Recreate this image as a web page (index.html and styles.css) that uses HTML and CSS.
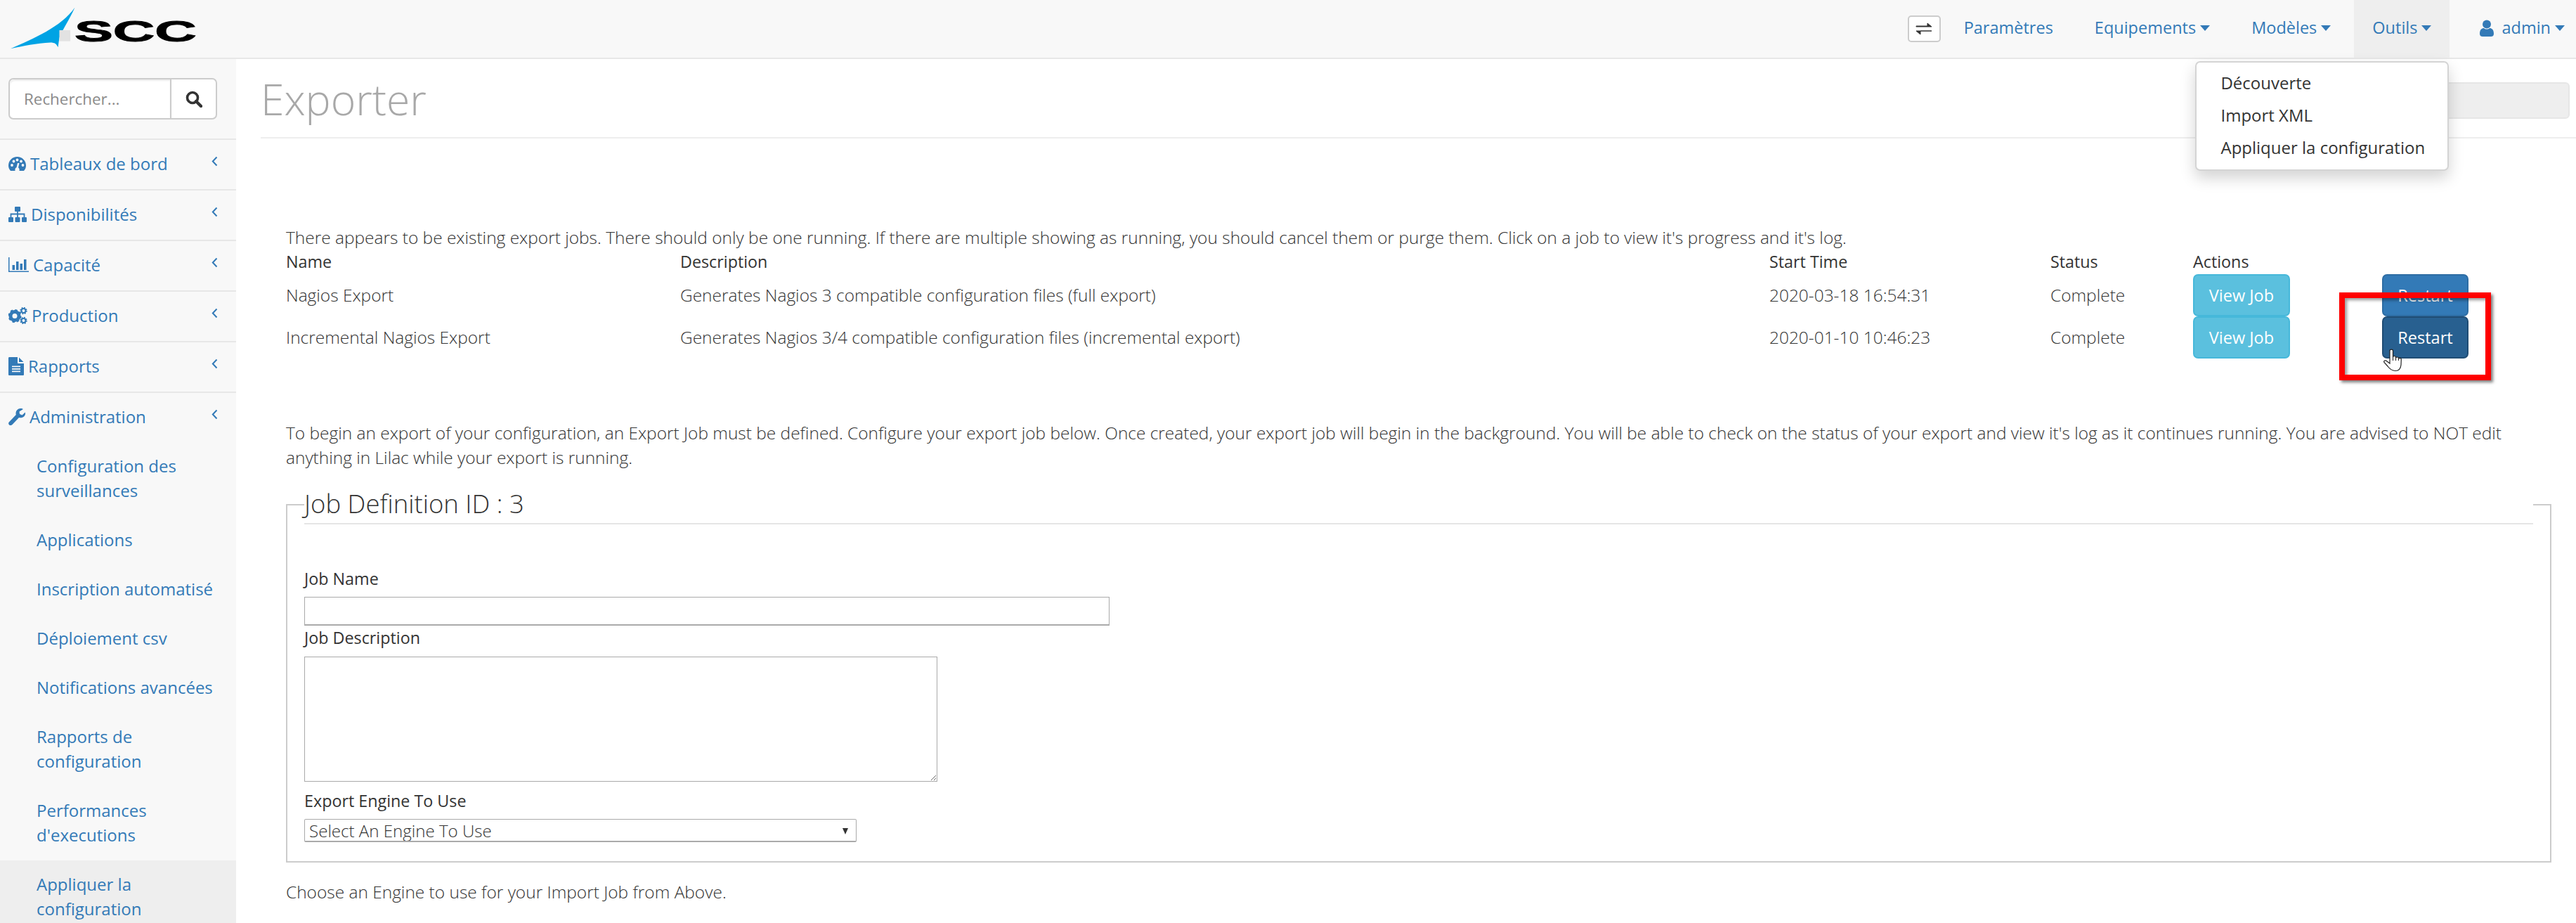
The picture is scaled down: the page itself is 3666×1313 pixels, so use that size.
FILE: index.html
```html
<!DOCTYPE html>
<html lang="fr">
<head>
    <meta charset="UTF-8">
    <title>Exporter</title>
    <link rel="stylesheet" href="styles.css">
</head>
<body>
    <nav class="navbar">
        <svg class="logo" viewBox="0 0 290 84" width="290" height="84">
            <path d="M105.5 11C97 30 88 42 83 55L81 69C79 64 76 62 70 62C50 63 30 67 12 71C45 56 85 40 105.5 11Z" fill="#00a3e4"/>
            <rect x="83" y="44" width="16" height="16" fill="#e2e2e2"/>
            <text x="105" y="60.5" class="logo-text" textLength="178" lengthAdjust="spacingAndGlyphs">SCC</text>
        </svg>
        <div class="nav-right">
            <button class="toggle-btn">
                <svg viewBox="0 0 24 20" width="24" height="20">
                    <path d="M1 6H17V2L23 7H1ZM23 13H7V18L1 13H23Z" fill="#333" stroke="#333" stroke-width="1"/>
                </svg>
            </button>
            <a class="nav-item">Paramètres</a>
            <a class="nav-item">Equipements<span class="caret"></span></a>
            <a class="nav-item">Modèles<span class="caret"></span></a>
            <div class="nav-item active">Outils<span class="caret"></span>
                <ul class="dropdown">
                    <li>Découverte</li>
                    <li>Import XML</li>
                    <li>Appliquer la configuration</li>
                </ul>
            </div>
            <a class="nav-item last">
                <svg class="user-icon" viewBox="0 0 20 24" width="20" height="24">
                    <circle cx="10" cy="6.5" r="6"/>
                    <path d="M0 20C0 14 3 12 6 12C8 14 12 14 14 12C17 12 20 14 20 20C20 23 18 24 16 24H4C2 24 0 23 0 20Z"/>
                </svg>admin<span class="caret"></span>
            </a>
        </div>
    </nav>

    <div class="wrapper">
        <aside class="sidebar">
            <div class="search-box">
                <div class="search-group">
                    <input class="search-input" type="text" placeholder="Rechercher...">
                    <button class="search-btn">
                        <svg viewBox="0 0 24 24" width="24" height="24">
                            <circle cx="10" cy="10" r="7.5" fill="none" stroke="#333" stroke-width="3.6"/>
                            <path d="M15 15L22 22" stroke="#333" stroke-width="4.4" stroke-linecap="round"/>
                        </svg>
                    </button>
                </div>
            </div>
            <ul class="side-menu">
                <li class="side-item">
                    <a class="side-link">
                        <svg class="icon" viewBox="0 0 25 20" width="25" height="20">
                            <path fill-rule="evenodd" d="M3 20C1 18 0 15 0 12.500C0 5.500 5.500 0 12.500 0S25 5.500 25 12.500C25 15 24 18 22 20H15.500C16 17.500 15 16 14 15.500L15.500 9L13 9L11.500 15.300C10 15.500 9 17.500 9.500 20Z"/>
                            <circle cx="5" cy="12" r="1.900" fill="#f8f8f8"/>
                            <circle cx="7.500" cy="6.500" r="1.900" fill="#f8f8f8"/>
                            <circle cx="12.500" cy="4.500" r="1.900" fill="#f8f8f8"/>
                            <circle cx="18" cy="6.500" r="1.900" fill="#f8f8f8"/>
                            <circle cx="20.500" cy="12" r="1.900" fill="#f8f8f8"/>
                        </svg>
                        <span class="side-label">Tableaux de bord</span>
                        <svg class="chevron" viewBox="0 0 9 15" width="9" height="15"><path d="M7.500 1.500L1.800 7.500L7.500 13.500"/></svg>
                    </a>
                </li>
                <li class="side-item">
                    <a class="side-link">
                        <svg class="icon" viewBox="0 0 26 22" width="26" height="22">
                            <rect x="9" y="0" width="8" height="7" rx="1"/>
                            <rect x="0" y="15" width="7" height="7" rx="1"/>
                            <rect x="9.500" y="15" width="7" height="7" rx="1"/>
                            <rect x="19" y="15" width="7" height="7" rx="1"/>
                            <path d="M3.500 15V10.500H22.500V15M13 7V15" fill="none" stroke="#337ab7" stroke-width="1.800"/>
                        </svg>
                        <span class="side-label">Disponibilités</span>
                        <svg class="chevron" viewBox="0 0 9 15" width="9" height="15"><path d="M7.500 1.500L1.800 7.500L7.500 13.500"/></svg>
                    </a>
                </li>
                <li class="side-item">
                    <a class="side-link">
                        <svg class="icon" viewBox="0 0 29 21" width="29" height="21">
                            <path d="M0 0H1.500V19.500H29V21H0Z"/>
                            <rect x="5.500" y="11" width="3.500" height="7"/>
                            <rect x="11" y="6" width="3.500" height="12"/>
                            <rect x="16.500" y="9" width="3.500" height="9"/>
                            <rect x="22" y="3" width="3.500" height="15"/>
                        </svg>
                        <span class="side-label">Capacité</span>
                        <svg class="chevron" viewBox="0 0 9 15" width="9" height="15"><path d="M7.500 1.500L1.800 7.500L7.500 13.500"/></svg>
                    </a>
                </li>
                <li class="side-item">
                    <a class="side-link">
                        <svg class="icon" viewBox="0 0 27 24" width="27" height="24">
                            <circle cx="9" cy="12.500" r="6" fill="none" stroke="#337ab7" stroke-width="5"/>
                            <circle cx="9" cy="12.500" r="8.200" fill="none" stroke="#337ab7" stroke-width="2.600" stroke-dasharray="3.400 3.040"/>
                            <circle cx="21.500" cy="5" r="3" fill="none" stroke="#337ab7" stroke-width="2"/>
                            <circle cx="21.500" cy="5" r="4.300" fill="none" stroke="#337ab7" stroke-width="1.800" stroke-dasharray="1.800 1.580"/>
                            <circle cx="21.500" cy="19" r="3" fill="none" stroke="#337ab7" stroke-width="2"/>
                            <circle cx="21.500" cy="19" r="4.300" fill="none" stroke="#337ab7" stroke-width="1.800" stroke-dasharray="1.800 1.580"/>
                        </svg>
                        <span class="side-label">Production</span>
                        <svg class="chevron" viewBox="0 0 9 15" width="9" height="15"><path d="M7.500 1.500L1.800 7.500L7.500 13.500"/></svg>
                    </a>
                </li>
                <li class="side-item">
                    <a class="side-link">
                        <svg class="icon" viewBox="0 0 22 26" width="22" height="26">
                            <path fill-rule="evenodd" d="M1.500 0H13V8C13 8.500 13.500 9 14 9H22V24.500C22 25.500 21.500 26 20.500 26H1.500C0.500 26 0 25.500 0 24.500V1.500C0 0.500 0.500 0 1.500 0ZM5 12.500V14.300H17V12.500ZM5 16V17.800H17V16ZM5 19.500V21.300H17V19.500Z"/>
                            <path d="M15 0.500L21.500 7H15Z"/>
                        </svg>
                        <span class="side-label">Rapports</span>
                        <svg class="chevron" viewBox="0 0 9 15" width="9" height="15"><path d="M7.500 1.500L1.800 7.500L7.500 13.500"/></svg>
                    </a>
                </li>
                <li class="side-item open">
                    <a class="side-link">
                        <svg class="icon" viewBox="0 0 24 24" width="24" height="24">
                            <path d="M17 0C19 0 20.500 0.500 21 1L15.500 4.500L16 8L19.500 9.500L24 5.500C24.500 8 23.500 10.500 21.500 12C19.500 13.500 17 13.500 15 13L5.500 23C4 24.500 2 24.500 1 23.300C-0.200 22 -0.200 20.500 1 19.200L10.800 9C10 6 11 3.500 12.500 2C13.800 0.700 15.500 0 17 0Z"/>
                        </svg>
                        <span class="side-label">Administration</span>
                        <svg class="chevron" viewBox="0 0 9 15" width="9" height="15"><path d="M7.500 1.500L1.800 7.500L7.500 13.500"/></svg>
                    </a>
                    <ul class="sub-menu">
                        <li><a>Configuration des surveillances</a></li>
                        <li><a>Applications</a></li>
                        <li><a>Inscription automatisé</a></li>
                        <li><a>Déploiement csv</a></li>
                        <li><a>Notifications avancées</a></li>
                        <li><a>Rapports de configuration</a></li>
                        <li><a>Performances d'executions</a></li>
                        <li class="current"><a>Appliquer la configuration</a></li>
                    </ul>
                </li>
            </ul>
        </aside>

        <main class="main">
            <header class="page-header">
                <h1>Exporter</h1>
                <div class="header-box"></div>
            </header>
            <section class="content">
                <p class="intro">There appears to be existing export jobs. There should only be one running. If there are multiple showing as running, you should cancel them or purge them. Click on a job to view it's progress and it's log.</p>
                <table class="jobs">
                    <colgroup>
                        <col class="col-name">
                        <col class="col-desc">
                        <col class="col-time">
                        <col class="col-status">
                        <col class="col-view">
                        <col class="col-restart">
                    </colgroup>
                    <thead>
                        <tr>
                            <th>Name</th>
                            <th>Description</th>
                            <th>Start Time</th>
                            <th>Status</th>
                            <th>Actions</th>
                            <th></th>
                        </tr>
                    </thead>
                    <tbody>
                        <tr>
                            <td>Nagios Export</td>
                            <td>Generates Nagios 3 compatible configuration files (full export)</td>
                            <td>2020-03-18 16:54:31</td>
                            <td>Complete</td>
                            <td><button class="btn btn-info">View Job</button></td>
                            <td><button class="btn btn-primary">Restart</button></td>
                        </tr>
                        <tr>
                            <td>Incremental Nagios Export</td>
                            <td>Generates Nagios 3/4 compatible configuration files (incremental export)</td>
                            <td>2020-01-10 10:46:23</td>
                            <td>Complete</td>
                            <td><button class="btn btn-info">View Job</button></td>
                            <td class="restart-cell">
                                <button class="btn btn-primary hover">Restart</button>
                                <div class="highlight"></div>
                                <svg class="pointer" viewBox="0 0 27 33" width="27" height="33">
                                    <path d="M9 15V3C9 .5 13.500 .5 13.500 3V12C14 10 17 10 17.500 12V13.500C18 11.500 21 11.500 21.500 13.500V14.500C22 13 25 13 25.300 15L25 23C24.500 28 22 31.500 17 31.500C12 31.500 9 29 6 25L1 19.500C0 17.500 2.500 15.500 5 18L9 21Z" fill="#fff" stroke="#222" stroke-width="1.200"/>
                                    <path d="M13.500 12V17M17.500 13V17M21.500 14V17" stroke="#222" stroke-width="1" fill="none"/>
                                </svg>
                            </td>
                        </tr>
                    </tbody>
                </table>
                <p class="begin">To begin an export of your configuration, an Export Job must be defined. Configure your export job below. Once created, your export job will begin in the background. You will be able to check on the status of your export and view it's log as it continues running. You are advised to NOT edit anything in Lilac while your export is running.</p>
                <fieldset class="job-form">
                    <legend>Job Definition ID : 3</legend>
                    <label class="first">Job Name</label>
                    <input class="job-name" type="text">
                    <label>Job Description</label>
                    <textarea class="job-desc"></textarea>
                    <label class="engine-label">Export Engine To Use</label>
                    <div class="select-wrap">
                        <select class="engine-select">
                            <option>Select An Engine To Use</option>
                        </select>
                    </div>
                </fieldset>
                <p class="choose">Choose an Engine to use for your Import Job from Above.</p>
            </section>
        </main>
    </div>
</body>
</html>
```
FILE: styles.css
```css
* {
    box-sizing: border-box;
}

html, body {
    height: 100%;
}

body {
    margin: 0;
    overflow: hidden;
    font-family: "Open Sans", "Noto Sans", sans-serif;
    font-size: 23.5px;
    line-height: 35px;
    color: #333;
    background: #fff;
    display: flex;
    flex-direction: column;
}

a {
    color: #337ab7;
    text-decoration: none;
}

ul {
    list-style: none;
    margin: 0;
    padding: 0;
}

/* top bar */
.navbar {
    flex: none;
    height: 84px;
    display: flex;
    justify-content: space-between;
    background: #f8f8f8;
    border-bottom: 2px solid #e7e7e7;
}

.logo {
    flex: none;
    height: 82px;
}

.logo-text {
    font-family: "Liberation Sans", sans-serif;
    font-weight: 700;
    font-size: 44px;
    fill: #000;
    stroke: #000;
    stroke-width: 1;
}

.nav-right {
    display: flex;
    align-items: stretch;
    gap: 7px;
}

.toggle-btn {
    align-self: flex-start;
    margin-top: 22px;
    width: 47px;
    height: 38px;
    padding: 0;
    display: flex;
    align-items: center;
    justify-content: center;
    background: #fff;
    border: 2px solid #ccc;
    border-radius: 5px;
}

.nav-item {
    position: relative;
    display: flex;
    align-items: center;
    padding: 0 26px 3px;
    color: #337ab7;
}

.nav-item.active {
    background: #eee;
}

.nav-item.last {
    padding-left: 36px;
    padding-right: 16px;
}

.user-icon {
    fill: #337ab7;
    margin-right: 11px;
}

.caret {
    display: inline-block;
    margin-left: 6px;
    border-top: 8px solid #337ab7;
    border-left: 7px solid transparent;
    border-right: 7px solid transparent;
}

.dropdown {
    position: absolute;
    z-index: 5;
    top: 87px;
    right: 1px;
    width: 361px;
    padding: 7px 0;
    background: #fff;
    border: 2px solid #d4d4d4;
    border-radius: 7px;
    box-shadow: 0 10px 21px rgba(0, 0, 0, 0.175);
    color: #333;
    font-size: 24px;
}

.dropdown li {
    height: 46px;
    line-height: 44px;
    padding-left: 34px;
    white-space: nowrap;
}

/* left column */
.wrapper {
    flex: 1;
    display: flex;
    min-height: 0;
}

.sidebar {
    flex: none;
    width: 336px;
    background: #f8f8f8;
    overflow: hidden;
    font-size: 24px;
}

.search-box {
    height: 113px;
    padding: 27px 0 0 12px;
}

.search-group {
    width: 297px;
    height: 59px;
    display: flex;
    background: #fff;
    border: 2px solid #ccc;
    border-radius: 7px;
}

.search-input {
    width: 230px;
    min-width: 0;
    padding: 0 20px;
    border: 0;
    border-right: 2px solid #ccc;
    border-radius: 7px 0 0 7px;
    background: none;
    font: inherit;
    font-size: 22.4px;
    color: #555;
    box-shadow: inset 0 2px 2px rgba(0, 0, 0, 0.075);
}

.search-input::placeholder {
    color: #8a8a8a;
    opacity: 1;
}

.search-btn {
    flex: 1;
    padding: 0;
    display: flex;
    align-items: center;
    justify-content: center;
    border: 0;
    background: none;
}

.side-item {
    border-top: 2px solid #e7e7e7;
}

.side-link {
    height: 70px;
    display: flex;
    align-items: center;
    padding: 0 26px 3px 12px;
}

.icon {
    flex: none;
    fill: #337ab7;
    margin-right: 6px;
}

.side-label {
    flex: 1;
}

.chevron {
    margin-bottom: 7px;
    fill: none;
    stroke: #337ab7;
    stroke-width: 2;
}

.sub-menu a {
    display: block;
    padding: 16px 20px 19px 52px;
}

.sub-menu .current {
    background: #eee;
}

/* page */
.main {
    flex: 1;
    min-width: 0;
}

.page-header {
    height: 113px;
    margin-left: 35px;
    padding-right: 9px;
    display: flex;
    justify-content: space-between;
    align-items: center;
    border-bottom: 2px solid #eee;
}

.page-header h1 {
    margin: 2px 0 0;
    font-size: 60.6px;
    font-weight: 300;
    line-height: 70px;
    color: #a8a8a8;
}

.header-box {
    width: 400px;
    height: 52px;
    margin-top: 7px;
    background: #eee;
    border: 2px solid #e6e6e6;
    border-radius: 6px;
}

.content {
    padding: 0 35px 0 71px;
    font-size: 24.46px;
    font-weight: 300;
}

.content p {
    margin: 0;
}

.intro {
    padding-top: 123px;
}

.jobs {
    width: 100%;
    table-layout: fixed;
    border-collapse: collapse;
}

.jobs th {
    height: 35px;
    padding: 0;
    text-align: left;
    font-size: 23.3px;
    font-weight: 400;
}

.jobs td {
    height: 60px;
    padding: 0 0 2px;
}

.col-name { width: 561px; }
.col-desc { width: 1550px; }
.col-time { width: 400px; }
.col-status { width: 203px; }
.col-view { width: 269px; }

.btn {
    display: block;
    height: 60px;
    margin-bottom: -2px;
    padding: 0;
    font: inherit;
    font-size: 23.5px;
    font-weight: 400;
    color: #fff;
    border: 2px solid;
    border-radius: 7px;
}

.btn-info {
    width: 138px;
    background: #5bc0de;
    border-color: #46b8da;
}

.btn-primary {
    width: 123px;
    background: #337ab7;
    border-color: #2e6da4;
}

.btn-primary.hover {
    background: #286090;
    border-color: #204d74;
}

.restart-cell {
    position: relative;
}

.highlight {
    position: absolute;
    z-index: 2;
    left: -61px;
    top: -34px;
    width: 216px;
    height: 125px;
    border: 8px solid #f00;
    box-shadow: 3px 3px 4px rgba(0, 0, 0, 0.5), inset 3px 3px 4px rgba(0, 0, 0, 0.4);
}

.pointer {
    position: absolute;
    z-index: 3;
    left: 2px;
    top: 46px;
}

.begin {
    padding-top: 88px;
}

.job-form {
    margin: 22px 0 0;
    padding: 0 24px 27px;
    min-width: 0;
    border: 2px solid #ccc;
}

.job-form legend {
    width: 100%;
    padding: 0 0 2px;
    font-size: 36.5px;
    line-height: 52px;
    font-weight: 300;
    border-bottom: 2px solid #e5e5e5;
}

.job-form label {
    display: block;
    height: 35px;
    font-size: 23.3px;
    font-weight: 400;
}

.job-form .first {
    margin-top: 60px;
    margin-bottom: 8px;
}

.job-name {
    display: block;
    width: 1146px;
    height: 41px;
    border: 1px solid #aaa;
    border-bottom-width: 2px;
}

.job-desc {
    display: block;
    width: 901px;
    height: 178px;
    margin-top: 9px;
    border: 1px solid #aaa;
    resize: both;
}

.job-form .engine-label {
    margin-top: 10px;
    margin-bottom: 8px;
}

.select-wrap {
    position: relative;
    width: 786px;
}

.select-wrap::after {
    content: "";
    position: absolute;
    right: 12px;
    top: 13px;
    border-top: 9px solid #333;
    border-left: 4px solid transparent;
    border-right: 4px solid transparent;
}

.engine-select {
    display: block;
    width: 100%;
    height: 33px;
    padding: 0 6px;
    font: inherit;
    font-size: 24.1px;
    line-height: 29px;
    font-weight: 300;
    color: #333;
    background: #fff;
    border: 1px solid #aaa;
    border-bottom-width: 2px;
    border-radius: 2px;
    appearance: none;
}

.choose {
    padding-top: 24px;
}
```
